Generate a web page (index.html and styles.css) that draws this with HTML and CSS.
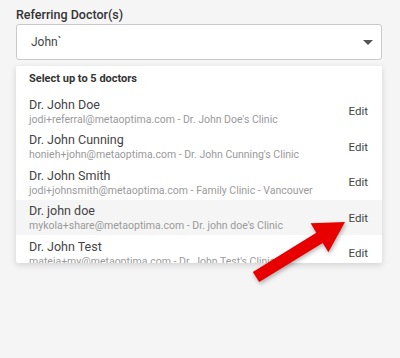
FILE: index.html
```html
<!DOCTYPE html>
<html lang="en">
<head>
    <meta charset="UTF-8">
    <meta name="viewport" content="width=device-width, initial-scale=1.0">
    <title>Referring Doctor</title>
    <link rel="stylesheet" href="styles.css">
</head>
<body>
    <div class="field">
        <label class="field-label">Referring Doctor(s)</label>

        <div class="select-box">
            <span class="select-value">John`</span>
            <span class="caret"></span>
        </div>

        <!-- Dropdown list -->
        <div class="dropdown">
            <div class="dropdown-header">Select up to 5 doctors</div>

            <div class="doctor-row">
                <div class="doctor-info">
                    <div class="doctor-name">Dr. John Doe</div>
                    <div class="doctor-email">jodi+referral@metaoptima.com - Dr. John Doe's Clinic</div>
                </div>
                <span class="edit-link">Edit</span>
            </div>

            <div class="doctor-row">
                <div class="doctor-info">
                    <div class="doctor-name">Dr. John Cunning</div>
                    <div class="doctor-email">honieh+john@metaoptima.com - Dr. John Cunning's Clinic</div>
                </div>
                <span class="edit-link">Edit</span>
            </div>

            <div class="doctor-row">
                <div class="doctor-info">
                    <div class="doctor-name">Dr. John Smith</div>
                    <div class="doctor-email">jodi+johnsmith@metaoptima.com - Family Clinic - Vancouver</div>
                </div>
                <span class="edit-link">Edit</span>
            </div>

            <div class="doctor-row hovered">
                <div class="doctor-info">
                    <div class="doctor-name">Dr. john doe</div>
                    <div class="doctor-email">mykola+share@metaoptima.com - Dr. john doe's Clinic</div>
                </div>
                <span class="edit-link">Edit</span>
            </div>

            <div class="doctor-row">
                <div class="doctor-info">
                    <div class="doctor-name">Dr. John Test</div>
                    <div class="doctor-email">mateja+my@metaoptima.com - Dr. John Test's Clinic</div>
                </div>
                <span class="edit-link">Edit</span>
            </div>
        </div>
    </div>

    <!-- Annotation arrow pointing at Edit -->
    <svg class="annotation" viewBox="0 0 400 358" width="400" height="358">
        <polygon points="345,222 310.6,223.3 316.3,232.7 252.8,271.9 259.2,282.1 322.7,242.9 328.4,252.3" />
    </svg>
</body>
</html>
```

FILE: styles.css
```css
body {
    font-family: Roboto, "Liberation Sans", sans-serif;
    background-color: #f5f5f5;
    margin: 0;
    padding: 0;
    width: 400px;
    height: 358px;
    overflow: hidden;
    position: relative;
}

.field {
    padding: 7px 18px 0 16px;
}

.field-label {
    display: block;
    font-size: 12.5px;
    font-weight: 500;
    line-height: 16px;
    color: #333;
    margin-bottom: 1px;
}

/* Select input */
.select-box {
    height: 36px;
    box-sizing: border-box;
    background-color: #fff;
    border: 1px solid #c9c9c9;
    border-radius: 3px;
    display: flex;
    align-items: center;
    justify-content: space-between;
    padding: 0 8px 0 14px;
}

.select-value {
    font-size: 12px;
    color: #444;
}

.caret {
    width: 0;
    height: 0;
    border-left: 5px solid transparent;
    border-right: 5px solid transparent;
    border-top: 5px solid #555;
}

/* Dropdown */
.dropdown {
    margin-top: 6px;
    height: 197px;
    overflow: hidden;
    background-color: #fff;
    border-radius: 2px;
    box-shadow: 0 2px 6px rgba(0, 0, 0, 0.15);
}

.dropdown-header {
    font-size: 11px;
    font-weight: 700;
    line-height: 14px;
    color: #333;
    padding: 6px 13px 7px;
}

.doctor-row {
    display: flex;
    align-items: center;
    justify-content: space-between;
    padding: 3.5px 14px 3px 13px;
}

.doctor-row.hovered {
    background-color: #f5f5f5;
}

.doctor-name {
    font-size: 12.5px;
    line-height: 16px;
    color: #444;
}

.doctor-email {
    font-size: 10.5px;
    line-height: 13px;
    color: #9a9a9a;
    white-space: nowrap;
}

.edit-link {
    font-size: 11.5px;
    color: #444;
    cursor: pointer;
}

/* Red arrow drawn over the list */
.annotation {
    position: absolute;
    top: 0;
    left: 0;
    pointer-events: none;
}

.annotation polygon {
    fill: #e80000;
    filter: drop-shadow(1px 2px 2px rgba(0, 0, 0, 0.3));
}
```
